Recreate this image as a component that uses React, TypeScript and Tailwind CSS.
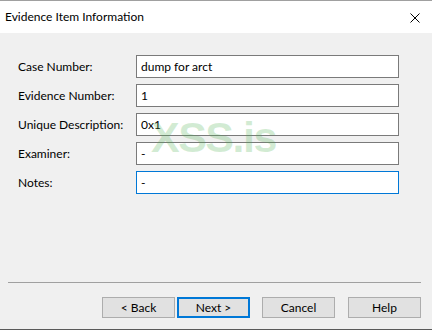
import React from "react";

const fields = [
  { label: "Case Number:", value: "dump for arct" },
  { label: "Evidence Number:", value: "1" },
  { label: "Unique Description:", value: "0x1" },
  { label: "Examiner:", value: "-" },
  { label: "Notes:", value: "-", focused: true },
];

const buttons = [
  { label: "< Back", ml: "" },
  { label: "Next >", ml: "ml-[2px]", focused: true },
  { label: "Cancel", ml: "ml-[12px]" },
  { label: "Help", ml: "ml-[13px]" },
];

export default function App() {
  return (
    <div
      className="relative w-[432px] h-[330px] bg-[#f0f0f0] flex flex-col text-[12px] text-black overflow-hidden"
      style={{ fontFamily: '"Segoe UI", Lato, "Noto Sans", sans-serif' }}
    >
      {/* title bar */}
      <div className="h-[33px] bg-white border-t border-[#a0a0a0] flex items-center justify-between pl-[5px] pr-[12px]">
        <span className="text-[12px] leading-none pb-[1px]">Evidence Item Information</span>
        <svg width="10" height="10" viewBox="0 0 10 10" className="mt-[1px]">
          <path d="M0.5 0.5 L9.5 9.5 M9.5 0.5 L0.5 9.5" stroke="#000" strokeWidth="1" />
        </svg>
      </div>

      {/* form */}
      <div className="flex flex-col gap-[6px] pt-[22px] pl-[18px]">
        {fields.map((f) => (
          <div key={f.label} className="flex items-center h-[23px]">
            <span className="w-[118px] leading-none">{f.label}</span>
            <div
              className={`w-[263px] h-[23px] bg-white flex items-center pl-[4px] leading-none ${
                f.focused ? "border border-[#0078d7]" : "border border-[#7a7a7a]"
              }`}
            >
              {f.value}
            </div>
          </div>
        ))}
      </div>

      <div className="flex-1" />

      {/* separator */}
      <div className="mx-[8px] w-[413px] h-px bg-[#a0a0a0]" />

      {/* buttons */}
      <div className="flex pl-[102px] pt-[14px] pb-[11px]">
        {buttons.map((b) => (
          <div
            key={b.label}
            className={`${b.ml} w-[73px] h-[21px] bg-[#e1e1e1] flex items-center justify-center leading-none ${
              b.focused ? "border-2 border-[#0078d7]" : "border border-[#adadad]"
            }`}
          >
            {b.label}
          </div>
        ))}
      </div>

      <div className="h-px bg-[#5a5a5a]" />

      {/* watermark */}
      <div
        className="absolute left-[151px] top-[116px] text-[length:43px] font-bold leading-none tracking-[-1.5px] text-[#4caf50]/25 pointer-events-none select-none"
        style={{ fontFamily: '"Liberation Sans", Arial, sans-serif' }}
      >
        XSS.is
      </div>
    </div>
  );
}
